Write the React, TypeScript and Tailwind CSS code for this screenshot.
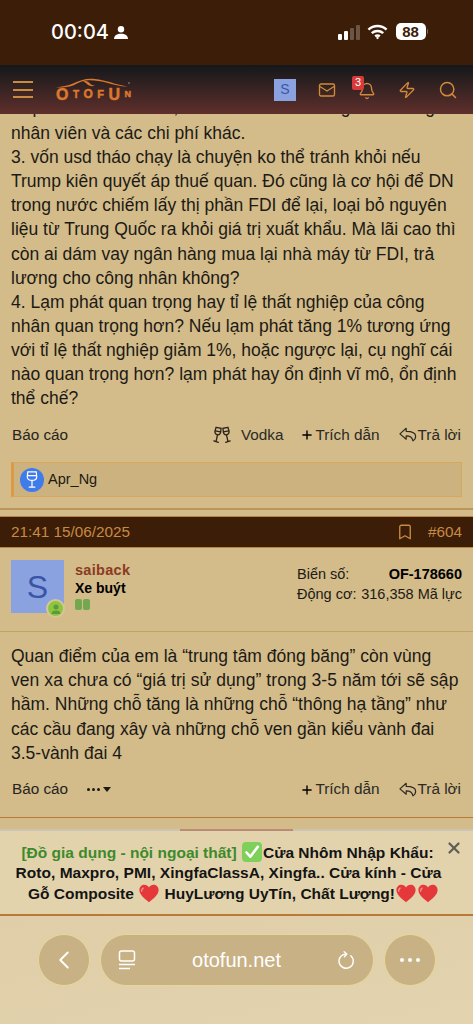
import type { ReactNode } from "react";
import { Mail, Bell, Zap, Search, Plus, Bookmark, X, ChevronLeft } from "lucide-react";

const sans = "font-['Liberation_Sans',Arial,sans-serif]";

function Heart() {
  return (
    <svg viewBox="0 0 24 22" className="mx-[1px] inline-block h-[19px] w-[20px] align-[-4px]">
      <path d="M12 21.500C5 16 .5 12 .5 6.800.5 3 3.300.5 6.500.5c2.300 0 4.300 1.200 5.500 3.200C13.200 1.700 15.200.5 17.500.5c3.200 0 6 2.500 6 6.300C23.500 12 19 16 12 21.500z" fill="#e5383b" />
      <path d="M5 4.500c-1.500.8-2 2.300-1.800 3.800" stroke="#f49a9c" strokeWidth="1.500" fill="none" strokeLinecap="round" />
    </svg>
  );
}

function CheckBox() {
  return (
    <svg viewBox="0 0 20 20" className="mx-[1px] inline-block h-[20px] w-[20px] align-[-4px]">
      <rect width="20" height="20" rx="4" fill="#7ed05a" />
      <path d="M4.500 10.500l3.800 4.200 7.500-10" stroke="#fff" strokeWidth="2.600" fill="none" strokeLinecap="round" strokeLinejoin="round" />
    </svg>
  );
}

function Logo() {
  return (
    <div className="relative h-[23px] w-[76px] text-[#dc782c]">
      <svg viewBox="0 0 76 12" className="absolute left-0 top-0 h-[12px] w-[76px]">
        <path d="M1 9.500C7 8.500 13 8 18 5.500 24 2.500 31 .2 38 .800c8 .7 15 2.700 22 5 4 1.200 9 2 13 3-8-.5-15-2-22-4.300C44 2.800 37 1.700 31 2.500c-5 .8-9 3-13 5-5 1.800-11 2.200-17 2z" fill="currentColor" />
        <path d="M28 3.500c3-1.500 6 .5 8 3 1.500 1 3 1.300 4 1-3 1.500-6 .5-8-1.500-1-1-2.500-2-4-2.500z" fill="currentColor" />
        <circle cx="74" cy="5" r="1" fill="#6d6a68" />
      </svg>
      <div className={`absolute left-[1px] top-[10px] flex w-[75px] items-end justify-between font-bold leading-[13px] [-webkit-text-stroke:0.5px_#dc782c] ${sans}`}>
        <span className="text-[16px]">O</span>
        <span className="text-[10px]">T</span>
        <span className="text-[12px]">O</span>
        <span className="text-[11px]">F</span>
        <span className="text-[16px]">U</span>
        <span className="text-[9px]">N</span>
      </div>
    </div>
  );
}

function Glasses() {
  return (
    <svg viewBox="0 0 22 20" className="h-[20px] w-[20px] fill-none stroke-[#2a2318]" strokeWidth="1.400" strokeLinecap="round">
      <path d="M4.500 1.500l5.500 1.200-.6 4.300c-.4 2-2 3-3.700 2.700C4 9.300 3 7.700 3.300 5.800z" />
      <path d="M17.500 1.500L12 2.700l.6 4.300c.4 2 2 3 3.700 2.700 1.700-.4 2.700-2 2.400-3.900z" />
      <path d="M3.500 5.500l6 1M18.500 5.500l-6 1M6 10l-1.500 7M2 16.500l5 1.500M16 10l1.500 7M20 16.500l-5 1.500" />
    </svg>
  );
}

function ReplyIcon() {
  return (
    <svg viewBox="0 0 20 17" className="h-[16px] w-[18px] fill-none stroke-[#2b2a24]" strokeWidth="1.300" strokeLinejoin="round">
      <path d="M8 1L1 7.200l7 6v-3.700c4 0 6.500.8 7.500 5.500 1.800-1 3-3 3-5 0-3.500-3.500-5.500-10.500-5.500z" />
    </svg>
  );
}

function PostActions({ left, right }: { left?: ReactNode; right?: ReactNode }) {
  return (
    <div className="flex h-[26px] items-center text-[15.300px] text-[#2b2a24]">
      <span className="w-[76px] pl-[1px] text-[#26241d]">Báo cáo</span>
      {left}
      <span className="ml-auto">{right}</span>
      <span className="ml-[17px] flex items-center">
        <Plus className="h-[14px] w-[14px] text-black" strokeWidth={2.400} />
        <span className="ml-[1px]">Trích dẫn</span>
      </span>
      <span className="ml-[19px] mr-[1px] flex items-center">
        <ReplyIcon />
        <span className="ml-[1px]">Trả lời</span>
      </span>
    </div>
  );
}

export default function App() {
  return (
    <div className={`flex h-[1024px] w-[473px] flex-col overflow-hidden bg-[#d3bb8a] ${sans}`}>
      {/* Status bar */}
      <div className="flex h-[65px] shrink-0 items-start bg-[#3c1d08] pl-[51px] pr-[45px] pt-[20px] text-white">
        <span className="font-['Inter',sans-serif] text-[20px] font-medium leading-[24px]">00:04</span>
        <svg viewBox="0 0 14 13" className="ml-[5px] mt-[6px] h-[13px] w-[14px] fill-white">
          <circle cx="7" cy="3.200" r="3.200" />
          <path d="M0 13c0-3.500 3-5.200 7-5.200s7 1.700 7 5.200z" />
        </svg>
        <div className="ml-auto flex items-center pt-[3px]">
          <div className="flex h-[16px] items-end gap-[2px]">
            <span className="h-[6px] w-[4px] rounded-[1px] bg-white" />
            <span className="h-[9px] w-[4px] rounded-[1px] bg-white" />
            <span className="h-[12px] w-[4px] rounded-[1px] bg-[#6d5545]" />
            <span className="h-[15px] w-[4px] rounded-[1px] bg-[#6d5545]" />
          </div>
          <svg viewBox="0 0 22 16" className="ml-[7px] h-[16px] w-[21px] fill-none stroke-white" strokeWidth="2.600">
            <path d="M1.500 5.500c5.500-5 13.500-5 19 0M5 9.200c3.500-3 8.500-3 12 0M8.500 12.500c1.500-1 3.500-1 5 0" />
            <circle cx="11" cy="14.300" r="1.200" fill="#fff" stroke="none" />
          </svg>
          <div className="ml-[8px] flex h-[17px] w-[30px] items-center justify-center rounded-[5px] bg-white text-[15px] font-bold leading-none text-[#3c1d08]">
            88
          </div>
          <span className="ml-[1px] h-[5px] w-[1.500px] rounded-r bg-[#7b6657]" />
        </div>
      </div>

      {/* Site nav */}
      <div className="z-10 flex h-[49px] shrink-0 items-center bg-gradient-to-b from-[#15171a] to-[#5f2f2b] pl-[13px] text-[#d08a3a]">
        <div className="flex w-[20px] flex-col gap-[5.500px]">
          <span className="h-[2px] bg-[#c98a42]" />
          <span className="h-[2px] bg-[#c98a42]" />
          <span className="h-[2px] bg-[#c98a42]" />
        </div>
        <div className="ml-[22px]"><Logo /></div>
        <div className="ml-[143px] flex h-[22px] w-[22px] items-center justify-center bg-[#8aa2e0] text-[14px] text-[#3d56a8]">S</div>
        <Mail className="ml-[22px] h-[18px] w-[18px]" strokeWidth={1.800} />
        <div className="relative ml-[22px] h-[20px] w-[20px]">
          <Bell className="h-[18px] w-[18px] translate-y-[2px]" strokeWidth={1.800} />
          <span className="absolute left-[-6px] top-[-4px] flex h-[14px] w-[12px] items-center justify-center rounded-[2px] bg-[#d83a3a] text-[11px] leading-none text-white">3</span>
        </div>
        <Zap className="ml-[20px] h-[18px] w-[18px]" strokeWidth={1.800} />
        <Search className="ml-[22px] h-[20px] w-[20px]" strokeWidth={1.800} />
      </div>

      {/* Thread */}
      <div className="relative min-h-0 flex-1 overflow-hidden">
        <div className="mt-[-17px] whitespace-nowrap px-[11px] text-[17.500px] leading-[24.100px] text-[#1c1a14]">
          <p className="-translate-y-[2px]">Sắp trả tiền thuê nhà, tiền thuế và trả lương cho lương</p>
          <p>nhân viên và các chi phí khác.</p>
          <p>3. vốn usd tháo chạy là chuyện ko thể tránh khỏi nếu</p>
          <p>Trump kiên quyết áp thuế quan. Đó cũng là cơ hội để DN</p>
          <p>trong nước chiếm lấy thị phần FDI để lại, loại bỏ nguyên</p>
          <p>liệu từ Trung Quốc ra khỏi giá trị xuất khẩu. Mà lãi cao thì</p>
          <p>còn ai dám vay ngân hàng mua lại nhà máy từ FDI, trả</p>
          <p>lương cho công nhân không?</p>
          <p>4. Lạm phát quan trọng hay tỉ lệ thất nghiệp của công</p>
          <p>nhân quan trọng hơn? Nếu lạm phát tăng 1% tương ứng</p>
          <p>với tỉ lệ thất nghiệp giảm 1%, hoặc ngược lại, cụ nghĩ cái</p>
          <p>nào quan trọng hơn? lạm phát hay ổn định vĩ mô, ổn định</p>
          <p>thể chế?</p>
        </div>

        <div className="mt-[12px] px-[11px]">
          <PostActions
            right={
              <span className="flex items-center">
                <Glasses />
                <span className="ml-[9px]">Vodka</span>
              </span>
            }
          />
        </div>

        {/* Reactions */}
        <div className="mx-[11px] mt-[14px] flex h-[35px] items-center border border-l-[3px] border-[#d9a65c] border-l-[#dc9a45] bg-[#cbb27e] pl-[6px]">
          <span className="flex h-[24px] w-[24px] items-center justify-center rounded-full bg-[#3f7bea]">
            <svg viewBox="0 0 12 18" className="h-[17px] w-[12px] fill-none stroke-white" strokeWidth="1.300">
              <path d="M1.500 1h9l.5 5c0 2.500-2 4-5 4s-5-1.500-5-4zM1 5h10M6 10v6.500M2.500 17h7" />
            </svg>
          </span>
          <span className="ml-[4px] text-[14.500px] text-[#1c1a14]">Apr_Ng</span>
        </div>

        <div className="mt-[11px] h-[2px] bg-[#bd9559]" />

        {/* Post #604 */}
        <div className="mt-[6px] flex h-[32px] items-center border-y border-[#b9823f] bg-[#3c1d08] px-[11px] text-[15.300px] text-[#c98a42]">
          <span>21:41 15/06/2025</span>
          <Bookmark className="ml-auto h-[18px] w-[18px]" strokeWidth={1.800} />
          <span className="ml-[14px]">#604</span>
        </div>

        <div className="flex h-[84px] border-b border-[#c2a468] px-[11px] pt-[12px]">
          <div className="relative h-[53px] w-[53px] shrink-0">
            <div className="flex h-[53px] w-[53px] items-center justify-center bg-[#8aa2e0] text-[32px] text-[#3a54a6]">S</div>
            <span className="absolute bottom-[-5px] right-[-1px] flex h-[19px] w-[19px] items-center justify-center rounded-full border-[2px] border-[#d8c596] bg-[#8cc63f]">
              <svg viewBox="0 0 12 12" className="h-[12px] w-[12px] fill-[#5f9a3a]">
                <circle cx="6" cy="4" r="2.500" />
                <path d="M1.500 11c0-2.500 2-3.500 4.500-3.500s4.500 1 4.500 3.500z" />
              </svg>
            </span>
          </div>
          <div className="ml-[11px] mt-[1px]">
            <div className="text-[14.500px] font-bold leading-[18px] tracking-[0.300px] text-[#8b3a22]">saiback</div>
            <div className="text-[14px] font-bold leading-[19px] text-black">Xe buýt</div>
            <div className="mt-[1px] flex gap-[1px]">
              <span className="h-[11px] w-[7px] rounded-[2px] bg-[#74a850]" />
              <span className="h-[11px] w-[7px] rounded-[2px] bg-[#74a850]" />
            </div>
          </div>
          <div className="ml-auto mt-[4px] w-[165px] text-[14.500px] leading-[20px] text-[#1c1a14]">
            <div className="flex justify-between">
              <span>Biển số:</span>
              <span className="font-bold text-black">OF-178660</span>
            </div>
            <div className="flex justify-between">
              <span>Động cơ:</span>
              <span>316,358 Mã lực</span>
            </div>
          </div>
        </div>

        <div className="mt-[12px] whitespace-nowrap px-[11px] text-[17.500px] leading-[24.100px] text-[#1c1a14]">
          <p>Quan điểm của em là “trung tâm đóng băng” còn vùng</p>
          <p className="tracking-[0.070px]">ven xa chưa có “giá trị sử dụng” trong 3-5 năm tới sẽ sập</p>
          <p>hầm. Những chỗ tăng là những chỗ “thông hạ tầng” như</p>
          <p>các cầu đang xây và những chỗ ven gần kiểu vành đai</p>
          <p>3.5-vành đai 4</p>
        </div>

        <div className="mt-[12px] px-[11px]">
          <PostActions
            left={
              <span className="flex items-center gap-[3px] text-[#1c1a14]">
                <span className="flex gap-[2px]">
                  <span className="h-[3px] w-[3px] rounded-full bg-[#1c1a14]" />
                  <span className="h-[3px] w-[3px] rounded-full bg-[#1c1a14]" />
                  <span className="h-[3px] w-[3px] rounded-full bg-[#1c1a14]" />
                </span>
                <span className="h-0 w-0 border-x-[4.500px] border-t-[5px] border-x-transparent border-t-[#1c1a14]" />
              </span>
            }
          />
        </div>

        <div className="mt-[14px] h-[1px] bg-[#b57a35]" />
      </div>

      {/* Ad banner */}
      <div className="relative shrink-0 whitespace-nowrap border-y-2 border-t-[#c9c4b4] border-b-[#b87a3a] bg-[#e3d3ac] pb-[10px] pl-[14px] pr-[30px] pt-[11px] text-center text-[15.500px] font-bold leading-[20.500px] text-[#141414]">
        <div className="absolute left-[180px] top-[-2px] h-[2px] w-[113px] bg-[#b98c78]" />
        <X className="absolute right-[10px] top-[8px] h-[18px] w-[18px] text-[#5f5f58]" strokeWidth={3} />
        <div className="pr-[2px]"><span className="text-[#3d8a2b]">[Đồ gia dụng - nội ngoại thất]</span> <CheckBox />Cửa Nhôm Nhập Khẩu:</div>
        <div className="tracking-[0.020px]">Roto, Maxpro, PMI, XingfaClassA, Xingfa.. Cửa kính - Cửa</div>
        <div className="pl-[10px]">Gỗ Composite <Heart /> HuyLương UyTín, Chất Lượng!<Heart /><Heart /></div>
      </div>

      {/* Safari toolbar */}
      <div className="flex h-[108px] shrink-0 items-start gap-[10px] bg-gradient-to-br from-[#dfcea8] to-[#e3d3ae] pl-[38px] pt-[18px]">
        <button className="flex h-[52px] w-[52px] items-center justify-center rounded-full border border-[#e6d894] bg-[#c8b184] text-white">
          <ChevronLeft className="h-[30px] w-[30px]" strokeWidth={1.600} />
        </button>
        <div className="flex h-[52px] w-[274px] items-center rounded-full border border-[#e6d894] bg-[#c8b184] px-[17px] text-white">
          <svg viewBox="0 0 18 20" className="h-[20px] w-[18px] fill-none stroke-white" strokeWidth="1.500">
            <rect x="1.500" y="1" width="15" height="10" rx="2" />
            <path d="M1 14.500h16M1 18.500h11" />
          </svg>
          <span className="flex-1 text-center text-[20px] leading-none">otofun.net</span>
          <svg viewBox="0 0 20 20" className="h-[19px] w-[19px] fill-none stroke-white" strokeWidth="1.500" strokeLinecap="round" strokeLinejoin="round">
            <path d="M14.500 5A7.500 7.500 0 1 1 10 3.200" />
            <path d="M7.500.8L10.300 3.200 7.800 6" />
          </svg>
        </div>
        <button className="flex h-[52px] w-[52px] items-center justify-center gap-[4px] rounded-full border border-[#e6d894] bg-[#c8b184]">
          <span className="h-[4px] w-[4px] rounded-full bg-white" />
          <span className="h-[4px] w-[4px] rounded-full bg-white" />
          <span className="h-[4px] w-[4px] rounded-full bg-white" />
        </button>
      </div>
    </div>
  );
}
